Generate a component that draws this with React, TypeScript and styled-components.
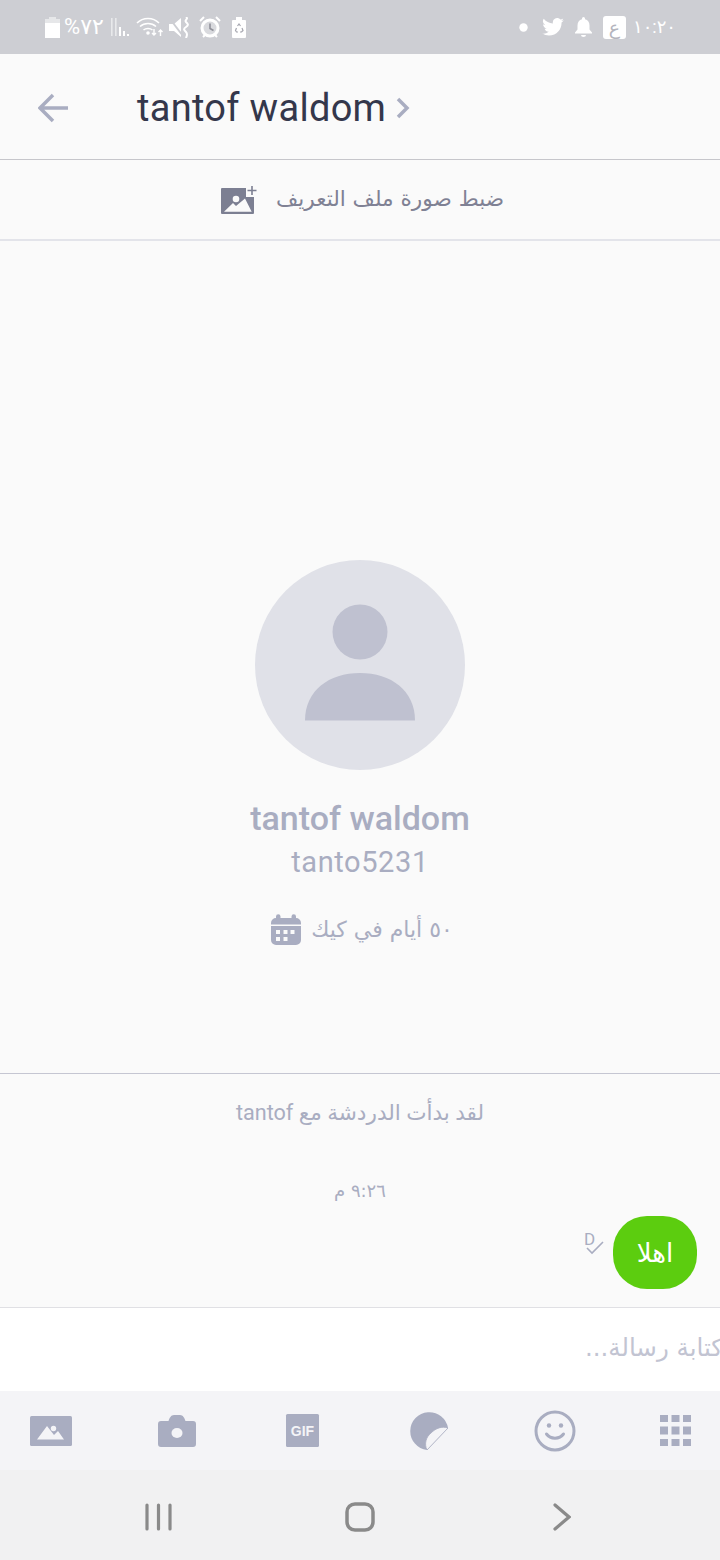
import React from "react";
import styled, { createGlobalStyle } from "styled-components";

const Global = createGlobalStyle`
  html, body { margin: 0; padding: 0; background: #fafafa; }
  body { font-family: Roboto, "DejaVu Sans", sans-serif; }
`;

const Page = styled.div`
  width: 720px;
  height: 1560px;
  display: flex;
  flex-direction: column;
  overflow: hidden;
  background: #fafafa;
`;

const StatusBar = styled.div`
  height: 54px;
  flex: none;
  background: #cdced3;
  display: flex;
  align-items: center;
  justify-content: space-between;
  padding: 0 44px 0 45px;
  color: #fff;
`;

const StatusGroup = styled.div`
  display: flex;
  align-items: center;
`;

const StatusText = styled.span<{ $size: number; $gap: number }>`
  font-size: ${(p) => p.$size}px;
  line-height: 24px;
  font-family: Roboto, "DejaVu Sans", sans-serif;
  color: #fff;
  margin-left: ${(p) => p.$gap}px;
  white-space: nowrap;
`;

const StatusIcon = styled.svg<{ $left?: number }>`
  display: block;
  flex: none;
  margin-left: ${(p) => p.$left ?? 0}px;
`;

const LetterTile = styled.div`
  width: 23px;
  height: 23px;
  margin-left: 11px;
  border-radius: 3px;
  background: #fff;
  color: #b4b5be;
  display: flex;
  align-items: center;
  justify-content: center;
  font-family: "DejaVu Sans", sans-serif;
  font-size: 19px;
  line-height: 23px;
`;

const Header = styled.div`
  height: 103px;
  padding-top: 2px;
  flex: none;
  display: flex;
  align-items: center;
  padding-left: 38px;
  border-bottom: 1px solid #c6c6cb;
`;

const BackIcon = styled.svg`
  display: block;
  flex: none;
  margin-right: 68px;
`;

const Title = styled.div`
  font-size: 38px;
  line-height: 44px;
  color: #34374b;
  letter-spacing: 0.3px;
  white-space: nowrap;
`;

const TitleChevron = styled.svg`
  display: block;
  margin-left: 10px;
  margin-top: 1px;
`;

const Banner = styled.div`
  height: 79px;
  flex: none;
  display: flex;
  align-items: center;
  justify-content: center;
  gap: 19px;
  border-bottom: 2px solid #e3e4ea;
  padding-left: 5px;
`;

const BannerIcon = styled.svg`
  display: block;
  flex: none;
  margin-top: 3px;
`;

const BannerText = styled.span`
  font-family: "DejaVu Sans", sans-serif;
  font-size: 21.6px;
  color: #7f8194;
  direction: rtl;
  white-space: nowrap;
  margin-bottom: 2px;
`;

const Profile = styled.div`
  height: 833px;
  flex: none;
  display: flex;
  flex-direction: column;
  align-items: center;
  padding-top: 319px;
  box-sizing: border-box;
  border-bottom: 1px solid #c5c6d2;
`;

const Avatar = styled.svg`
  display: block;
  flex: none;
`;

const ProfileName = styled.div`
  margin-top: 28px;
  font-size: 34px;
  line-height: 40px;
  font-weight: 500;
  color: #a9adc1;
  white-space: nowrap;
`;

const ProfileHandle = styled.div`
  margin-top: 6px;
  font-size: 29px;
  line-height: 36px;
  color: #a9adc1;
  letter-spacing: 0.6px;
`;

const Tenure = styled.div`
  margin-top: 34px;
  display: flex;
  align-items: center;
  gap: 10px;
  padding-left: 4px;
`;

const TenureText = styled.span`
  font-family: "DejaVu Sans", sans-serif;
  font-size: 22px;
  line-height: 30px;
  color: #a9adc1;
  direction: rtl;
  white-space: nowrap;
`;

const Chat = styled.div`
  height: 234px;
  flex: none;
  box-sizing: border-box;
  display: flex;
  flex-direction: column;
  border-bottom: 1px solid #e0e0e4;
`;

const ChatStart = styled.div`
  margin-top: 24px;
  font-size: 21.6px;
  line-height: 30px;
  color: #a9adc1;
  text-align: center;
  direction: rtl;
  font-family: Roboto, "DejaVu Sans", sans-serif;
`;

const ChatTime = styled.div`
  margin-top: 51px;
  font-size: 18px;
  line-height: 24px;
  color: #a9adc1;
  text-align: center;
  direction: rtl;
  font-family: "DejaVu Sans", sans-serif;
`;

const MessageRow = styled.div`
  margin-top: 13px;
  display: flex;
  justify-content: flex-end;
  align-items: flex-start;
  padding-right: 23px;
  gap: 7px;
`;

const Receipt = styled.div`
  position: relative;
  width: 22px;
  height: 28px;
  margin-top: 13px;
  flex: none;
`;

const ReceiptLetter = styled.span`
  font-size: 17px;
  line-height: 20px;
  color: #a9adc1;
  display: block;
`;

const ReceiptCheck = styled.svg`
  position: absolute;
  left: 1px;
  top: 11px;
`;

const Bubble = styled.div`
  width: 84px;
  height: 73px;
  border-radius: 34px;
  background: #5ccd0f;
  color: #fff;
  display: flex;
  align-items: center;
  justify-content: center;
  font-family: "DejaVu Sans", sans-serif;
  font-size: 26px;
  direction: rtl;
`;

const InputBar = styled.div`
  height: 78px;
  padding-bottom: 5px;
  flex: none;
  background: #fff;
  display: flex;
  align-items: center;
  justify-content: flex-end;
  overflow: hidden;
`;

const Placeholder = styled.span`
  font-family: "DejaVu Sans", sans-serif;
  font-size: 24.5px;
  color: #c2c4d2;
  direction: rtl;
  white-space: nowrap;
  margin-right: -3px;
  flex: none;
`;

const Toolbar = styled.div`
  height: 79px;
  flex: none;
  background: #f4f4f7;
  display: grid;
  grid-template-columns: 128px 128px 124px 124px 126px 1fr;
  align-items: center;
  justify-items: start;
  padding-left: 30px;
`;

const ToolIcon = styled.svg`
  display: block;
  flex: none;
`;

const GifBox = styled.div`
  width: 33px;
  height: 33px;
  background: #a9adc1;
  border-radius: 1.5px;
  color: #f4f4f7;
  display: flex;
  align-items: center;
  justify-content: center;
  font-family: "Liberation Sans", sans-serif;
  font-weight: 700;
  font-size: 14px;
`;

const NavBar = styled.div`
  height: 90px;
  flex: none;
  background: #f1f1f2;
  display: grid;
  grid-template-columns: repeat(3, 1fr);
  align-items: center;
  justify-items: center;
`;

const NavSlot = styled.div<{ $shift: number }>`
  display: flex;
  margin-left: ${(p) => p.$shift}px;
  margin-top: 3px;
`;

const NavIcon = styled.svg`
  display: block;
`;

const Battery = () => (
  <StatusIcon width="15" height="21" viewBox="0 0 15 21">
    <path d="M4 0h7v2h4v5H0V2h4z" fill="#fff" opacity="0.5" />
    <path d="M0 6h15v15H0z" fill="#fff" />
  </StatusIcon>
);

const Signal = () => (
  <StatusIcon $left={7} width="18" height="20" viewBox="0 0 18 20">
    <rect x="0" y="1" width="1.6" height="18" fill="#fff" opacity="0.55" />
    <rect x="4" y="1" width="1.6" height="18" fill="#fff" opacity="0.55" />
    <rect x="8" y="10" width="2" height="9" fill="#fff" />
    <rect x="12" y="14" width="2" height="5" fill="#fff" />
    <rect x="16" y="17" width="2" height="2" fill="#fff" />
  </StatusIcon>
);

const Wifi = () => (
  <StatusIcon $left={7} width="27" height="20" viewBox="0 0 27 20" fill="none" stroke="#fff" strokeWidth="1.6">
    <path d="M1 6c6-6 16-6 22 0" />
    <path d="M4 9.500c4.500-4 11.500-4 16 0" />
    <path d="M7.500 13c2.500-2 6.500-2 9 0" />
    <circle cx="12" cy="16" r="1" fill="#fff" />
    <path d="M18 12v6m-2-2 2 2 2-2M24.500 19v-6m-2 2 2-2 2 2" strokeWidth="1.400" />
  </StatusIcon>
);

const Mute = () => (
  <StatusIcon $left={6} width="21" height="21" viewBox="0 0 21 21">
    <path d="M0 7h5l7-6v19l-7-6H0z" fill="#fff" />
    <path d="M1 2l13 17" stroke="#cdced3" strokeWidth="2" />
    <path d="M17 0c3 2-2 3 0 5s3 3 0 5-2 3 0 5 1 3 0 6" stroke="#fff" strokeWidth="2" fill="none" />
  </StatusIcon>
);

const Alarm = () => (
  <StatusIcon $left={9} width="22" height="22" viewBox="0 0 22 22">
    <circle cx="11" cy="12" r="8" fill="#fff" fillOpacity="0.25" stroke="#fff" strokeWidth="3" />
    <path d="M11 7.500v5l3.500 2" fill="none" stroke="#8f9099" strokeWidth="1.600" />
    <path d="M1 5l4-4M21 5l-4-4M4 21l2-2M18 21l-2-2" stroke="#fff" strokeWidth="2" />
  </StatusIcon>
);

const Recycle = () => (
  <StatusIcon $left={11} width="14" height="21" viewBox="0 0 14 21">
    <path d="M4 0h6v3h3a1 1 0 0 1 1 1v16a1 1 0 0 1-1 1H1a1 1 0 0 1-1-1V4a1 1 0 0 1 1-1h3z" fill="#fff" />
    <path d="M5.500 9 7 7l1.500 2M10 11l1 2.500-1.500 1.500H8M6 15H4.500L3.500 13.500 4.500 11" fill="none" stroke="#a5a6af" strokeWidth="1.200" />
  </StatusIcon>
);

const Twitter = () => (
  <StatusIcon $left={14} width="22" height="18" viewBox="0 0 24 20">
    <path
      d="M24 2.400a10 10 0 0 1-2.800.8 5 5 0 0 0 2.200-2.700 10 10 0 0 1-3.100 1.200A4.900 4.900 0 0 0 11.900 6.100 14 14 0 0 1 1.700.9a4.900 4.900 0 0 0 1.500 6.600 4.900 4.900 0 0 1-2.200-.6c0 2.400 1.700 4.400 3.900 4.900a4.900 4.900 0 0 1-2.200.1 4.900 4.900 0 0 0 4.600 3.400A9.900 9.900 0 0 1 0 17.300 14 14 0 0 0 7.500 19.500c9.100 0 14.300-7.700 14-14.600A10 10 0 0 0 24 2.400z"
      fill="#fff"
    />
  </StatusIcon>
);

const Bell = () => (
  <StatusIcon $left={11} width="17" height="20" viewBox="0 0 17 20">
    <path d="M8.500 0a1.500 1.500 0 0 1 1.500 1.500v.8c3 .7 4.500 3.200 4.500 6.200v4l2.500 3v1H0v-1l2.500-3v-4c0-3 1.500-5.500 4.500-6.200v-.8A1.500 1.500 0 0 1 8.500 0z" fill="#fff" />
    <path d="M6 18h5a2.500 2 0 0 1-5 0z" fill="#fff" />
  </StatusIcon>
);

function App() {
  return (
    <Page>
      <Global />
      <StatusBar>
        <StatusGroup>
          <Battery />
          <StatusText $size={22} $gap={4} dir="ltr">%٧٢</StatusText>
          <Signal />
          <Wifi />
          <Mute />
          <Alarm />
          <Recycle />
        </StatusGroup>
        <StatusGroup>
          <StatusIcon width="9" height="9" viewBox="0 0 9 9">
            <circle cx="4.500" cy="4.500" r="4.200" fill="#fff" />
          </StatusIcon>
          <Twitter />
          <Bell />
          <LetterTile>ع</LetterTile>
          <StatusText $size={18} $gap={7} dir="ltr">١٠:٢٠</StatusText>
        </StatusGroup>
      </StatusBar>

      <Header>
        <BackIcon width="31" height="30" viewBox="0 0 31 30" fill="none" stroke="#a9adc1" strokeWidth="3.500">
          <path d="M30 15H3M15 2 2 15l13 13" />
        </BackIcon>
        <Title>tantof waldom</Title>
        <TitleChevron width="14" height="22" viewBox="0 0 14 22" fill="none" stroke="#a9adc1" strokeWidth="3.500">
          <path d="M2 2l9 9-9 9" />
        </TitleChevron>
      </Header>

      <Banner>
        <BannerIcon width="36" height="30" viewBox="0 0 36 30">
          <path d="M1 2h24v9h8v16a1 1 0 0 1-1 1H1a1 1 0 0 1-1-1V3a1 1 0 0 1 1-1z" fill="#7c7f92" />
          <path d="M3 25.700 12 17l3 3 9-7.500 6.700 13.200z" fill="#fafafa" />
          <circle cx="15" cy="13" r="3.300" fill="#fafafa" />
          <path d="M31 0v9M26.500 4.500h9" stroke="#7c7f92" strokeWidth="1.600" />
        </BannerIcon>
        <BannerText>ضبط صورة ملف التعريف</BannerText>
      </Banner>

      <Profile>
        <Avatar width="210" height="210" viewBox="0 0 210 210">
          <circle cx="105" cy="105" r="105" fill="#e0e1e8" />
          <circle cx="105" cy="72" r="27.500" fill="#bfc1d0" />
          <path d="M50 160.500c0-30 24-47.500 55-47.500s55 17.500 55 47.500z" fill="#bfc1d0" />
        </Avatar>
        <ProfileName>tantof waldom</ProfileName>
        <ProfileHandle>tanto5231</ProfileHandle>
        <Tenure>
          <ToolIcon width="30" height="31" viewBox="0 0 30 31">
            <path d="M5 4V2.500a2 2 0 0 1 4.500 0V4h11V2.500a2 2 0 0 1 4.500 0V4a5 5 0 0 1 5 5v17a5 5 0 0 1-5 5H5a5 5 0 0 1-5-5V9a5 5 0 0 1 5-5z" fill="#a9adc1" />
            <rect x="0" y="10.500" width="30" height="1.500" fill="#fafafa" />
            <path d="M5 16h4v4H5zM12.500 16h4v4h-4zM19.500 16h4v4h-4zM5 23h4v4H5zM12.500 23h4v4h-4z" fill="#fafafa" />
          </ToolIcon>
          <TenureText>٥٠ أيام في كيك</TenureText>
        </Tenure>
      </Profile>

      <Chat>
        <ChatStart>لقد بدأت الدردشة مع tantof</ChatStart>
        <ChatTime>٩:٢٦ م</ChatTime>
        <MessageRow>
          <Receipt>
            <ReceiptLetter>D</ReceiptLetter>
            <ReceiptCheck width="20" height="16" viewBox="0 0 20 16" fill="none" stroke="#a9adc1" strokeWidth="1.600">
              <path d="M2 8l5 5L18 2" />
            </ReceiptCheck>
          </Receipt>
          <Bubble>اهلا</Bubble>
        </MessageRow>
      </Chat>

      <InputBar>
        <Placeholder>كتابة رسالة...</Placeholder>
      </InputBar>

      <Toolbar>
        <ToolIcon width="42" height="30" viewBox="0 0 42 30">
          <rect width="42" height="30" rx="1.500" fill="#a9adc1" />
          <path d="M7 23.500 17 10l7 9 4-4 6 8.500z" fill="#f4f4f7" />
          <circle cx="23.500" cy="12.500" r="2.700" fill="#f4f4f7" />
        </ToolIcon>
        <ToolIcon width="38" height="32" viewBox="0 0 38 32">
          <path d="M3 6h7.500C11.500 3 13 0 16 0h6c3 0 4.500 3 5.500 6H35a3 3 0 0 1 3 3v20a3 3 0 0 1-3 3H3a3 3 0 0 1-3-3V9a3 3 0 0 1 3-3z" fill="#a9adc1" />
          <ellipse cx="19" cy="18" rx="5.500" ry="5" fill="#f4f4f7" />
        </ToolIcon>
        <GifBox>GIF</GifBox>
        <ToolIcon width="38" height="38" viewBox="0 0 38 38">
          <path d="M38 16A19 19 0 1 0 17 38z" fill="#a9adc1" />
          <path d="M38 16 17 38c-3-6-1-13 4-17 5-5 11-7 17-5z" fill="#f4f4f7" stroke="#a9adc1" strokeWidth="0.800" />
        </ToolIcon>
        <ToolIcon width="42" height="42" viewBox="0 0 42 42" fill="none">
          <circle cx="21" cy="21" r="19" stroke="#a9adc1" strokeWidth="3" />
          <circle cx="15" cy="15.500" r="2.200" fill="#a9adc1" />
          <circle cx="27" cy="15.500" r="2.200" fill="#a9adc1" />
          <path d="M12.500 24c4 5.500 13 5.500 17 0" stroke="#a9adc1" strokeWidth="3" strokeLinecap="round" />
        </ToolIcon>
        <ToolIcon width="31" height="31" viewBox="0 0 31 31">
          <path d="M0 0h8v7H0zM11.500 0h8v7h-8zM23 0h8v7h-8zM0 11.500h8v8H0zM11.500 11.500h8v8h-8zM23 11.500h8v8h-8zM0 24h8v7H0zM11.500 24h8v7h-8zM23 24h8v7h-8z" fill="#a9adc1" />
        </ToolIcon>
      </Toolbar>

      <NavBar>
        <NavSlot $shift={77}>
          <NavIcon width="27" height="28" viewBox="0 0 27 28" stroke="#8a8a8a" strokeWidth="3.200" strokeLinecap="round">
            <path d="M2 2v24M13.500 2v24M25 2v24" />
          </NavIcon>
        </NavSlot>
        <NavSlot $shift={0}>
          <NavIcon width="30" height="30" viewBox="0 0 30 30" fill="none" stroke="#8a8a8a" strokeWidth="3.500">
            <rect x="2" y="2" width="26" height="26" rx="8" />
          </NavIcon>
        </NavSlot>
        <NavSlot $shift={-76}>
          <NavIcon width="18" height="28" viewBox="0 0 18 28" fill="none" stroke="#8a8a8a" strokeWidth="3.200" strokeLinecap="round">
            <path d="M2 2l14 12L2 26" />
          </NavIcon>
        </NavSlot>
      </NavBar>
    </Page>
  );
}

export default App;
